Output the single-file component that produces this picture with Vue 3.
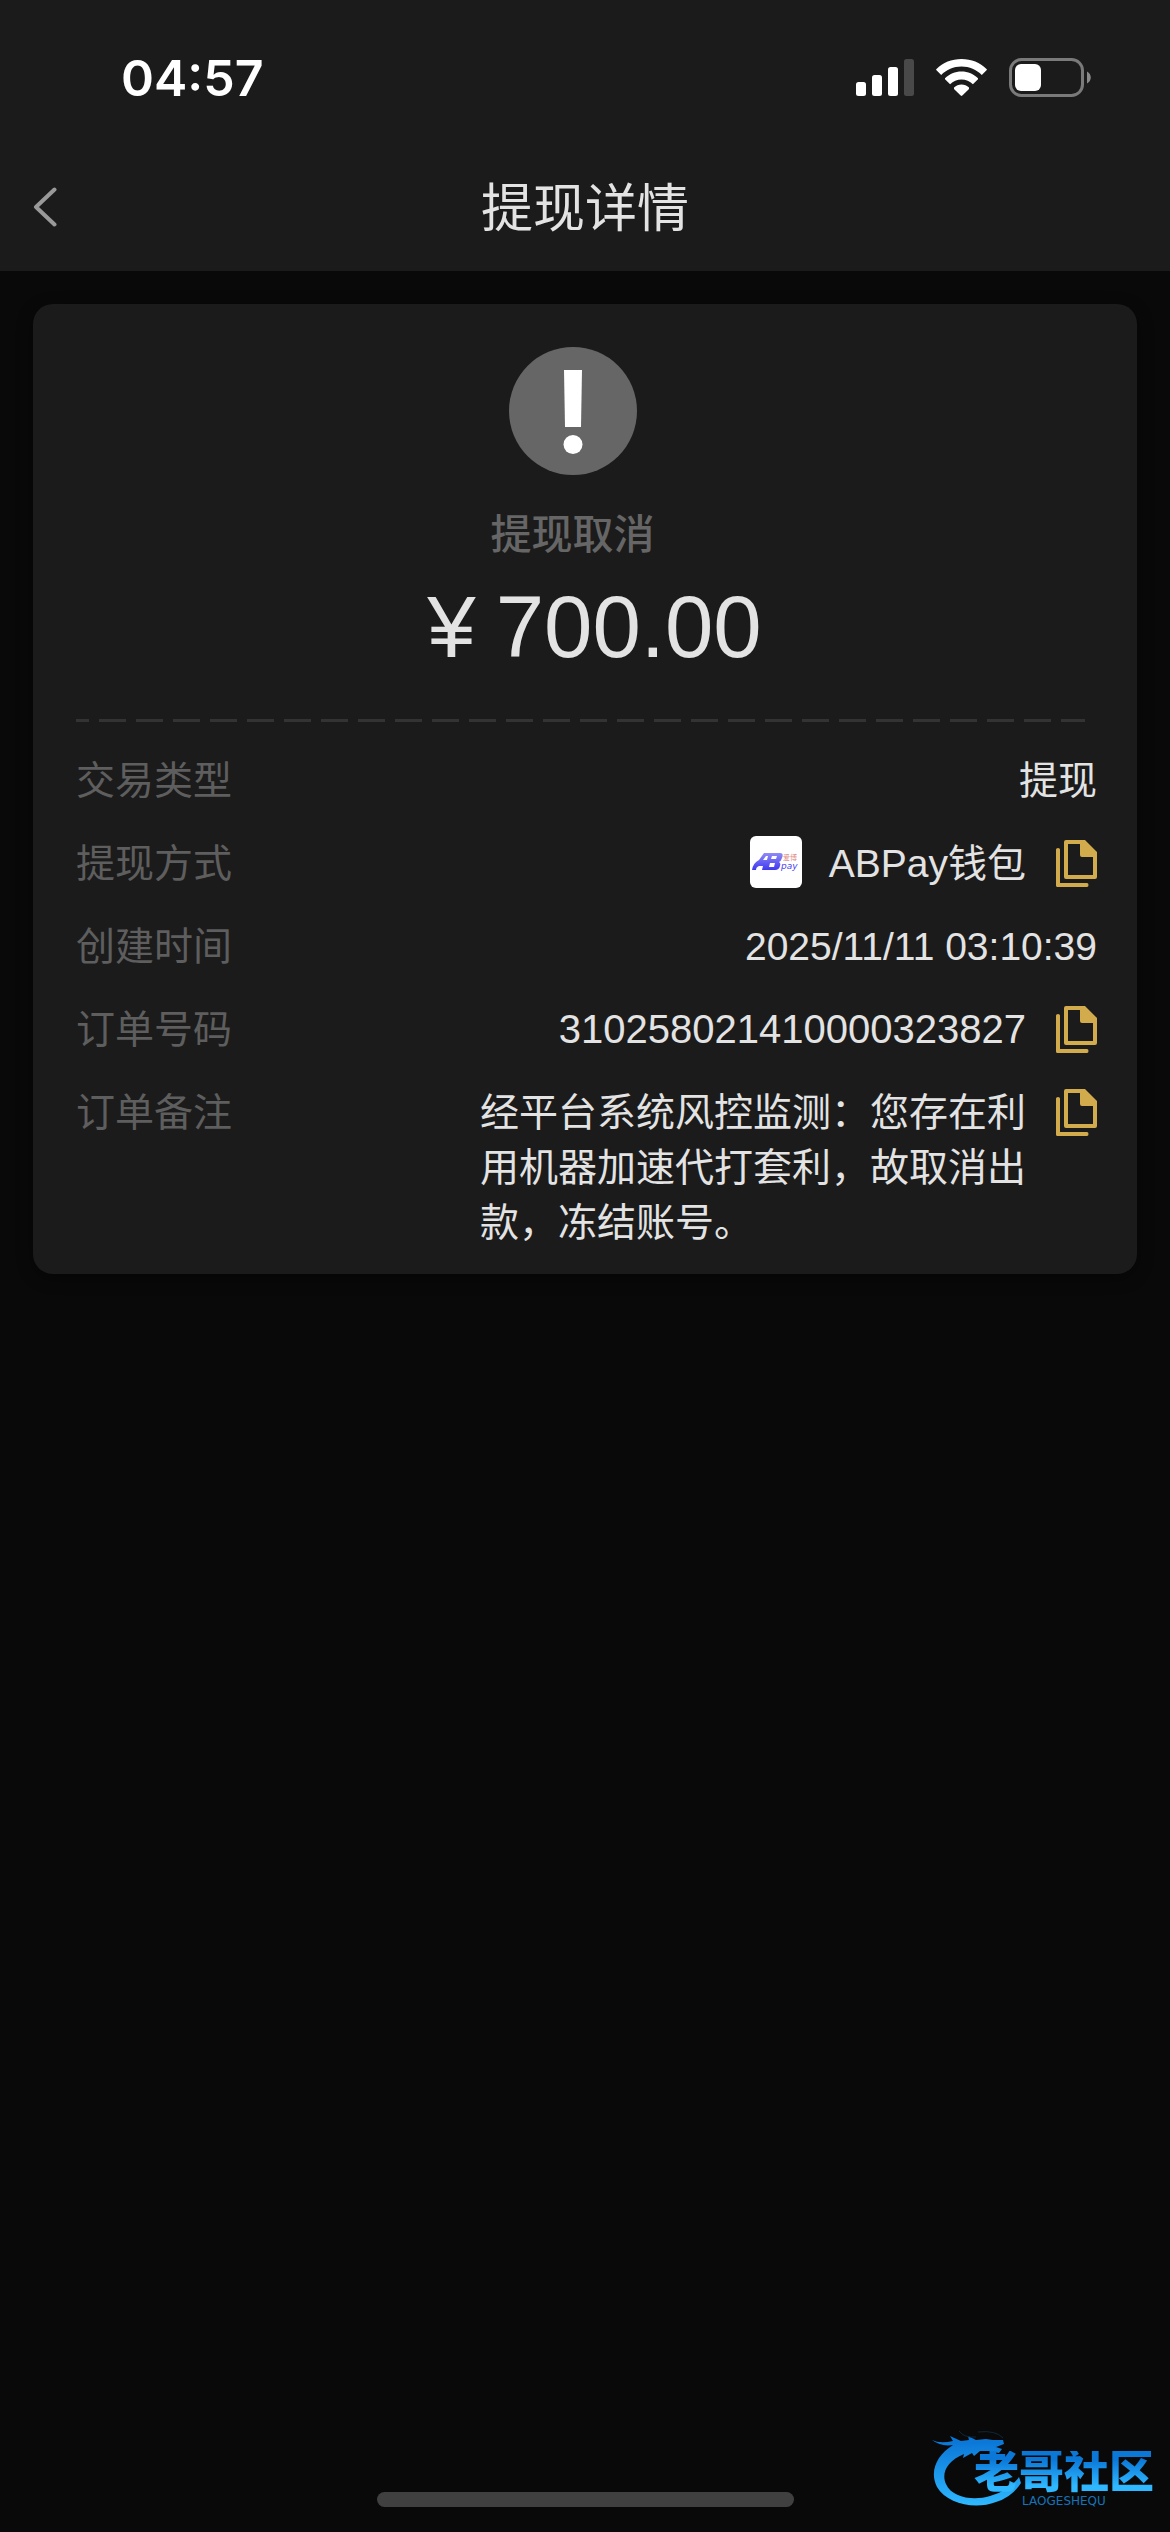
<template>
  <div class="page">
    <header class="header">
      <div class="status-bar">
        <span class="clock">04:57</span>
        <div class="status-icons">
          <svg class="signal" viewBox="0 0 58 37" aria-hidden="true">
            <rect
              v-for="bar in signalBars"
              :key="bar.x"
              :x="bar.x"
              :y="37 - bar.height"
              width="10"
              :height="bar.height"
              rx="2.5"
              :fill="bar.active ? '#fff' : '#494949'"
            />
          </svg>
          <svg class="wifi" viewBox="0 0 51 37" aria-hidden="true">
            <path
              d="M25.5 0C35.300 0 44.200 3.700 50.500 9.900L51 10.700L45.800 15.900C40.500 10.800 33.400 7.500 25.500 7.500S10.500 10.800 5.200 15.900L0 10.700L.500 9.900C6.800 3.700 15.700 0 25.500 0Z"
            />
            <path
              d="M25.500 12.500C31.900 12.500 37.700 15 42 19.200V20.200L36.900 25.300C33.900 22.400 29.900 20.600 25.500 20.600S17.100 22.400 14.100 25.300L9 20.200V19.200C13.300 15 19.100 12.500 25.500 12.500Z"
            />
            <path
              d="M25.500 25.500C28.300 25.500 30.900 26.600 33 28.500V29.900L26.300 36.600Q25.500 37.300 24.700 36.600L18 29.900V28.500C20.100 26.600 22.700 25.500 25.500 25.500Z"
            />
          </svg>
          <svg class="battery" viewBox="0 0 82 39" aria-hidden="true">
            <rect
              x="1.500"
              y="1.500"
              width="72"
              height="36"
              rx="11"
              fill="none"
              stroke="#7a7a7a"
              stroke-width="3"
            />
            <rect x="6" y="6" width="26" height="27" rx="6" fill="#fff" />
            <path d="M78 13.500C83 16 83 23 78 25.500Z" fill="#8a8a8a" />
          </svg>
        </div>
      </div>
      <nav class="nav-bar">
        <button class="back" type="button" aria-label="返回">
          <svg viewBox="0 0 23 40" aria-hidden="true">
            <path d="M21 2.500L2.500 20L21 37.500" />
          </svg>
        </button>
        <h1 class="title">提现详情</h1>
      </nav>
    </header>

    <main class="card">
      <section class="summary">
        <svg class="summary-icon" viewBox="0 0 128 128" aria-hidden="true">
          <circle cx="64" cy="64" r="64" fill="#666" />
          <path d="M55 23H73L72 80H56Z" fill="#fff" />
          <circle cx="64" cy="97.500" r="9.500" fill="#fff" />
        </svg>
        <p class="summary-status">提现取消</p>
      </section>
      <p class="amount"><span>¥</span><span>700.00</span></p>
      <div class="divider"></div>
      <dl class="details">
        <div v-for="row in rows" :key="row.label" class="row">
          <dt class="row-label">{{ row.label }}</dt>
          <dd class="row-value">
            <svg
              v-if="row.logo"
              class="pay-logo"
              viewBox="0 0 52 52"
              aria-hidden="true"
            >
              <defs>
                <linearGradient id="pay-gradient" x1="0" y1="0" x2="0" y2="1">
                  <stop offset="0" stop-color="#8f8bf5" />
                  <stop offset="1" stop-color="#4038f0" />
                </linearGradient>
              </defs>
              <rect width="52" height="52" rx="6" fill="#fff" />
              <path
                d="M2 34Q3 27 9 24L14 17H30Q34 17 32 22Q31 25 29 26Q31 27 30 30Q29 34 25 34H12L13 30H9Q6 31 6 34ZM13 24H17L18 20H16ZM22 20L21 23H26L27 20ZM20 27L19 31H24L25 27Z"
                fill="url(#pay-gradient)"
                fill-rule="evenodd"
              />
              <text class="pay-cn" x="33" y="24">爱博</text>
              <text class="pay-en" x="31" y="33">pay</text>
            </svg>
            <span :class="['row-text', row.type]">{{ row.value }}</span>
            <button
              v-if="row.copy"
              class="copy"
              type="button"
              :aria-label="`复制${row.label}`"
              @click="copyText(row.value)"
            >
              <svg viewBox="0 0 41 47" aria-hidden="true">
                <path
                  d="M10 0H29L41 12V37Q41 39 39 39H10Q8 39 8 37V2Q8 0 10 0ZM12 4V35H37V17H26Q24 17 24 15V4Z"
                  fill-rule="evenodd"
                />
                <path
                  d="M0 9.500Q0 8 2 8T4 9.500V43H31Q32.500 43 32.500 45T31 47H1.500Q0 47 0 45.500Z"
                />
              </svg>
            </button>
          </dd>
        </div>
      </dl>
    </main>

    <div class="home-indicator"></div>

    <div class="watermark">
      <svg class="dragon" viewBox="0 0 90 76" aria-hidden="true">
        <defs>
          <linearGradient id="dragon-gradient" x1="0" y1="0" x2="0" y2="1">
            <stop offset="0.100" stop-color="#0b78d8" />
            <stop offset="1" stop-color="#2fb8ff" />
          </linearGradient>
        </defs>
        <path
          d="M0 9Q8 13 21 10L18 5L29 10L37 9L36 5L44 9L54 8L61 9L71 9L72 13L64 16L70 18L67 22L57 20L48 20L42 25L40 22L31 27L32 23C15 30 9 42 14 53C20 67 42 70 58 65Q78 59 87 46L89 52Q80 66 64 71C43 79 15 73 5 56C-3 40 5 24 21 14Q9 16 0 9Z"
          fill="url(#dragon-gradient)"
        />
        <path
          d="M27 0Q32 7 44 6M46 1Q64 -1 71 7"
          fill="none"
          stroke="#10273a"
          stroke-width="1"
        />
      </svg>
      <div class="watermark-text">
        <span class="watermark-cn">老哥社区</span>
        <span class="watermark-en">LAOGESHEQU</span>
      </div>
    </div>
  </div>
</template>

<script setup>
const signalBars = [
  { x: 0, height: 14, active: true },
  { x: 16, height: 21, active: true },
  { x: 32, height: 29, active: true },
  { x: 48, height: 37, active: false },
];

const rows = [
  { label: '交易类型', value: '提现' },
  { label: '提现方式', value: 'ABPay钱包', logo: true, copy: true },
  { label: '创建时间', value: '2025/11/11 03:10:39' },
  {
    label: '订单号码',
    value: '310258021410000323827',
    type: 'number',
    copy: true,
  },
  {
    label: '订单备注',
    value: '经平台系统风控监测：您存在利用机器加速代打套利，故取消出款，冻结账号。',
    type: 'remark',
    copy: true,
  },
];

const copyText = (text) => navigator.clipboard?.writeText(text);
</script>

<style>
body {
  margin: 0;
  background: #090909;
}
</style>

<style scoped>
.page {
  position: relative;
  display: flex;
  flex-direction: column;
  min-height: 100vh;
  background: #090909;
  color: #e3e3e3;
  font-family: 'Liberation Sans', 'Noto Sans CJK SC', sans-serif;
}

.page * {
  box-sizing: border-box;
}

button {
  display: flex;
  padding: 0;
  border: 0;
  background: none;
  cursor: pointer;
}

.header {
  background: #1b1b1b;
}

.status-bar {
  display: flex;
  align-items: center;
  justify-content: space-between;
  height: 143px;
  padding: 12px 79px 0 121px;
}

.clock {
  color: #fff;
  font-family: Inter, sans-serif;
  font-size: 50px;
  font-weight: 600;
}

.status-icons {
  display: flex;
  align-items: center;
  fill: #fff;
}

.signal {
  width: 58px;
  height: 37px;
}

.wifi {
  width: 51px;
  height: 37px;
  margin: 0 22px;
}

.battery {
  width: 82px;
  height: 39px;
}

.nav-bar {
  display: grid;
  grid-template-columns: 1fr auto 1fr;
  align-items: center;
  height: 128px;
  padding: 0 33px;
}

.back svg {
  width: 24px;
  height: 40px;
  fill: none;
  stroke: #999;
  stroke-width: 4;
  stroke-linecap: round;
  stroke-linejoin: round;
}

.title {
  margin: 0;
  padding-top: 4px;
  font-size: 52px;
  font-weight: 400;
  line-height: 76px;
}

.card {
  margin: 33px;
  padding: 43px 40px 24px 43px;
  border-radius: 20px;
  background: #1b1b1b;
  box-shadow: 0 4px 16px rgba(0, 0, 0, 0.4);
}

.summary {
  display: flex;
  flex-direction: column;
  align-items: center;
  padding-right: 28px;
}

.summary-icon {
  width: 128px;
  height: 128px;
}

.summary-status {
  margin: 30px 0 0;
  color: #666;
  font-size: 41px;
  font-weight: 500;
  line-height: 60px;
}

.amount {
  display: flex;
  justify-content: center;
  gap: 20px;
  margin: 12px 0 0;
  padding-left: 16px;
  font-size: 87px;
  line-height: 100px;
}

.divider {
  height: 3px;
  margin: 42px 12px 31px 0;
  background: repeating-linear-gradient(
      90deg,
      #333 0 27px,
      transparent 27px 37px
    )
    -14px 0 / calc(100% + 14px) 100%;
}

.details {
  display: flex;
  flex-direction: column;
  gap: 28px;
  margin: 0;
  font-size: 39px;
  line-height: 55px;
}

.row {
  display: flex;
  justify-content: space-between;
}

.row-label {
  color: #5e5e5e;
}

.row-value {
  display: flex;
  margin: 0;
}

.number {
  font-size: 40px;
}

.remark {
  width: 546px;
}

.pay-logo {
  width: 52px;
  height: 52px;
  margin-right: 27px;
}

.pay-cn {
  fill: #e08a86;
  font-size: 7px;
}

.pay-en {
  fill: #4a42f0;
  font-family: 'DejaVu Sans', sans-serif;
  font-size: 9px;
  font-style: italic;
}

.copy {
  align-items: center;
  height: 55px;
  margin-left: 30px;
}

.copy svg {
  width: 41px;
  height: 47px;
  fill: #d1ab4c;
}

.home-indicator {
  width: 417px;
  height: 15px;
  margin: auto auto 25px;
  border-radius: 8px;
  background: #404040;
}

.watermark {
  position: absolute;
  right: 16px;
  bottom: 25px;
  display: flex;
  align-items: flex-end;
}

.dragon {
  width: 90px;
  height: 76px;
}

.watermark-text {
  display: flex;
  flex-direction: column;
  align-items: center;
  margin-left: -48px;
}

.watermark-cn {
  background: linear-gradient(#0b78d8 20%, #2fb8ff 80%);
  background-clip: text;
  color: transparent;
  font-size: 45px;
  font-weight: 900;
  line-height: 44px;
}

.watermark-en {
  color: #1673b8;
  font-family: 'DejaVu Sans', sans-serif;
  font-size: 12px;
  line-height: 12px;
}
</style>
